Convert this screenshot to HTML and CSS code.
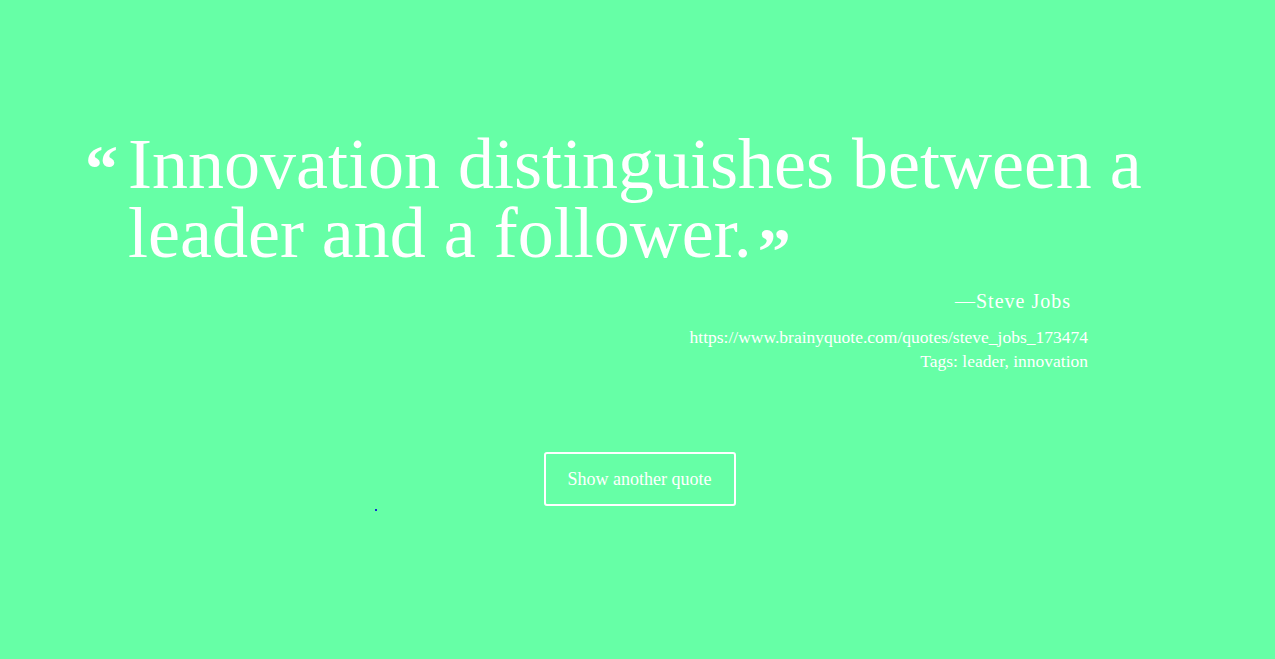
FILE: index.html
```html
<!DOCTYPE html>
<html lang="en">
<head>
<meta charset="utf-8">
<title>Random Quote</title>
<link rel="stylesheet" href="styles.css">
</head>
<body>
<main class="page">
  <section class="quote-box">
    <blockquote class="quote">
      <span class="mark open">&ldquo;</span>
      <p class="quote-text">Innovation distinguishes between a leader and a follower.<span class="mark close">&rdquo;</span></p>
    </blockquote>
    <p class="author">&mdash;Steve Jobs</p>
    <div class="meta">
      <p class="source">https://www.brainyquote.com/quotes/steve_jobs_173474</p>
      <p class="tags">Tags: leader, innovation</p>
    </div>
  </section>
  <div class="actions">
    <span class="dot"></span>
    <button class="btn" type="button">Show another quote</button>
  </div>
</main>
</body>
</html>
```
FILE: styles.css
```css
html, body {
  margin: 0;
  padding: 0;
  background: #66ffa6;
  color: #fff;
  font-family: "Liberation Serif", "DejaVu Serif", serif;
}
.page {
  min-height: 659px;
  padding-top: 130px;
  box-sizing: border-box;
}
.quote-box {
  width: 1003px;
  margin-left: 85px;
}
.quote {
  display: flex;
  margin: 0;
}
.mark {
  font-family: "Liberation Serif", serif;
  font-weight: bold;
  font-size: 66px;
  line-height: 1;
}
.mark.open {
  width: 43px;
  flex: none;
  margin-top: 6px;
}
.mark.close {
  margin-left: 6px;
  position: relative;
  top: 16px;
}
.quote-text {
  margin: 0;
  font-size: 72px;
  line-height: 69px;
  width: 1050px;
  flex: none;
}
.author {
  margin: 22px 0 0;
  text-align: right;
  padding-right: 17px;
  font-size: 20px;
  letter-spacing: 1px;
}
.meta {
  margin-top: 12px;
  text-align: right;
  font-size: 17.5px;
  line-height: 24px;
}
.meta p { margin: 0; }
.actions {
  margin-top: 79px;
  display: flex;
  justify-content: center;
  position: relative;
}
.dot {
  position: absolute;
  left: 375px;
  top: 57px;
  width: 2px;
  height: 2px;
  background: #1030d0;
}
.btn {
  margin-left: 4px;
  background: transparent;
  border: 2px solid #fff;
  border-radius: 3px;
  color: #fff;
  font-family: "Liberation Serif", serif;
  font-size: 18px;
  width: 192px;
  height: 54px;
  cursor: pointer;
}
```
